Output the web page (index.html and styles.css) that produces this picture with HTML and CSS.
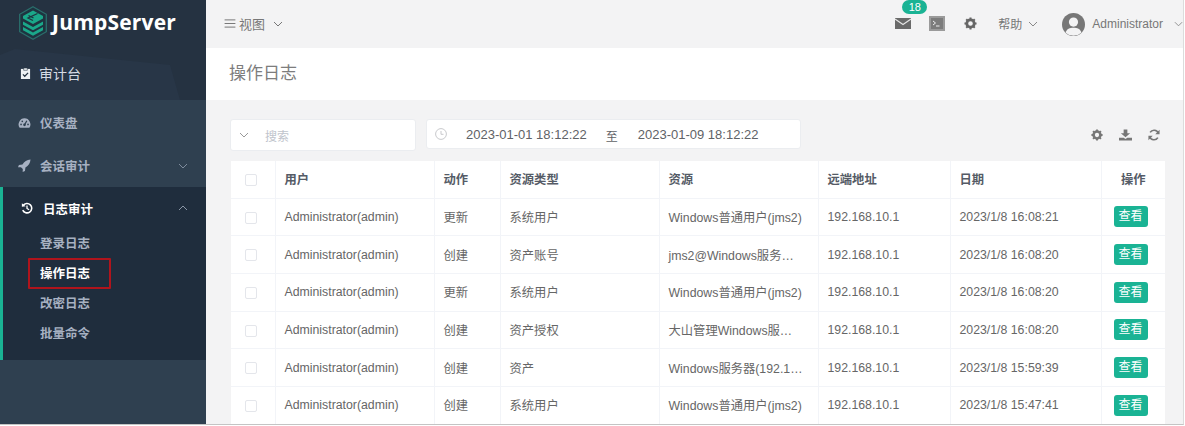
FILE: index.html
```html
<!DOCTYPE html>
<html lang="zh">
<head>
<meta charset="utf-8">
<title>操作日志</title>
<link rel="stylesheet" href="styles.css">
</head>
<body>
<div class="app">
  <aside class="sidebar">
    <div class="side-head">
      <div class="logo">
        <svg class="logo-mark" viewBox="0 0 28 34" width="28" height="34">
          <path d="M14 .8 27.300 8.300v17.400L14 33.200.700 25.700V8.300Z" fill="#1e3440" stroke="#2a6f6c" stroke-width="1.300"/>
          <path d="M14 4.500 24 10v2.500L14 18 4 12.500V10Z" fill="#1aa88a"/>
          <path d="M4 15.500 14 21l10-5.500v3.200L14 24.200 4 18.700Z" fill="#1aa88a"/>
          <path d="M4 21 14 26.500 24 21v3.200L14 29.700 4 24.200Z" fill="#1aa88a"/>
          <path d="M18.500 7.500 9 12l5 2.500M9.500 9.500l5 2.500" fill="none" stroke="#1e3440" stroke-width="1.300"/>
        </svg>
        <span class="logo-text">JumpServer</span>
      </div>
      <div class="console">
        <svg class="console-icon" viewBox="0 0 12 14" width="11" height="13">
          <path d="M1 2h10v11H1Z" fill="#eef1f4"/>
          <path d="M4 1h4v2.500H4Z" fill="#eef1f4" stroke="#253342" stroke-width=".6"/>
          <path d="m3.200 8 2 2 3.600-3.700" fill="none" stroke="#253342" stroke-width="1.400"/>
        </svg>
        <span>审计台</span>
      </div>
    </div>
    <nav class="menu">
      <div class="menu-item">
        <svg class="menu-icon" viewBox="0 0 14 12" width="13" height="12">
          <path d="M7 1a6.500 6.500 0 0 0-5.200 10.200h10.400A6.500 6.500 0 0 0 7 1Z" fill="#a7b1c2"/>
          <path d="M7 8 9.500 3.500" stroke="#2f4050" stroke-width="1.300"/>
          <circle cx="7" cy="8" r="1.400" fill="#2f4050"/>
          <circle cx="3.300" cy="7.500" r=".9" fill="#2f4050"/>
          <circle cx="4.600" cy="4.200" r=".9" fill="#2f4050"/>
          <circle cx="10.800" cy="7.500" r=".9" fill="#2f4050"/>
        </svg>
        <span>仪表盘</span>
      </div>
      <div class="menu-item">
        <svg class="menu-icon" viewBox="0 0 14 14" width="13" height="13">
          <path d="M13.500.5C9.500.8 6.800 2.800 4.800 6L1 6.500 0 9l3.200-.2 2 2L5 14l2.500-1 .5-3.800C11.200 7.200 13.200 4.500 13.500.5Z" fill="#a7b1c2"/>
        </svg>
        <span>会话审计</span>
        <svg class="chev" viewBox="0 0 10 6" width="10" height="6"><path d="m1 1 4 4 4-4" fill="none" stroke="#7f8c9d" stroke-width="1"/></svg>
      </div>
      <div class="group">
        <div class="group-title">
          <svg class="history" viewBox="0 0 14 14" width="12" height="12">
            <path d="M2.500 4A5.500 5.500 0 1 1 2 9.500" fill="none" stroke="#fff" stroke-width="1.800"/>
            <path d="M1 1.500 5.500 5 1 5.500Z" fill="#fff"/>
            <path d="M7 4v3.500l2.500 1.500" fill="none" stroke="#fff" stroke-width="1.500"/>
          </svg>
          <span>日志审计</span>
          <svg class="chev" viewBox="0 0 10 6" width="10" height="6"><path d="m1 5 4-4 4 4" fill="none" stroke="#8a96a6" stroke-width="1"/></svg>
        </div>
        <a class="sub">登录日志</a>
        <a class="sub current">操作日志</a>
        <a class="sub">改密日志</a>
        <a class="sub">批量命令</a>
      </div>
    </nav>
  </aside>

  <main class="main">
    <header class="topbar">
      <div class="view-menu">
        <svg viewBox="0 0 12 10" width="12" height="9"><path d="M0 1h12M0 5h12M0 9h12" stroke="#777" stroke-width="1.100"/></svg>
        <span>视图</span>
        <svg class="gap-chev" viewBox="0 0 10 6" width="10" height="6"><path d="m1 1 4 4 4-4" fill="none" stroke="#777" stroke-width="1"/></svg>
      </div>
      <div class="top-right">
        <div class="mail">
          <span class="badge">18</span>
          <svg viewBox="0 0 16 11" width="16" height="11"><path d="M0 0h16v11H0Z" fill="#6a6a6a"/><path d="m0 1 8 5.500L16 1" fill="none" stroke="#e6e6e6" stroke-width="1.100"/></svg>
        </div>
        <svg class="term" viewBox="0 0 16 15" width="16" height="15">
          <path d="M0 0h16v15H0Z" fill="#9a9a9a"/><path d="M2 2h12v11H2Z" fill="#7c7c7c"/>
          <path d="m4 5 2.500 2L4 9M7 10h3.500" fill="none" stroke="#eee" stroke-width="1"/>
        </svg>
        <svg class="gear" viewBox="0 0 14 14" width="13" height="13">
          <circle cx="7" cy="7" r="4" fill="none" stroke="#666" stroke-width="3"/>
          <path d="M7 .5v2.500M7 11v2.500M.5 7H3M11 7h2.500M2.400 2.400l1.800 1.800M9.800 9.800l1.800 1.800M11.600 2.400 9.800 4.200M4.200 9.800l-1.800 1.800" stroke="#666" stroke-width="2.200"/>
        </svg>
        <div class="help">
          <span>帮助</span>
          <svg viewBox="0 0 10 6" width="10" height="6"><path d="m1 1 4 4 4-4" fill="none" stroke="#888" stroke-width="1"/></svg>
        </div>
        <div class="user">
          <svg class="avatar" viewBox="0 0 24 24" width="23" height="23">
            <circle cx="12" cy="12" r="12" fill="#777"/>
            <circle cx="12" cy="9.500" r="4.800" fill="#f3f3f4"/>
            <path d="M3.800 20.500C5 16.500 8 15.500 12 15.500s7 1 8.200 5A12 12 0 0 1 3.800 20.500Z" fill="#f3f3f4"/>
          </svg>
          <span>Administrator</span>
          <svg class="user-chev" viewBox="0 0 10 6" width="9" height="6"><path d="m1 1 4 4 4-4" fill="none" stroke="#888" stroke-width="1"/></svg>
        </div>
      </div>
    </header>
    <div class="page-head">操作日志</div>
    <section class="content">
      <div class="toolbar">
        <div class="search">
          <svg viewBox="0 0 10 6" width="10" height="6"><path d="m1 1 4 4 4-4" fill="none" stroke="#999" stroke-width="1"/></svg>
          <span>搜索</span>
        </div>
        <div class="range">
          <svg viewBox="0 0 12 12" width="12" height="12"><circle cx="6" cy="6" r="5.400" fill="none" stroke="#c8c9cc" stroke-width="1"/><path d="M6 3v3.300h2.500" fill="none" stroke="#c8c9cc" stroke-width="1"/></svg>
          <span class="date first">2023-01-01 18:12:22</span>
          <span class="to">至</span>
          <span class="date">2023-01-09 18:12:22</span>
        </div>
        <div class="actions">
          <svg viewBox="0 0 14 14" width="12" height="12">
            <circle cx="7" cy="7" r="4" fill="none" stroke="#777" stroke-width="3"/>
            <path d="M7 .5v2.500M7 11v2.500M.5 7H3M11 7h2.500M2.400 2.400l1.800 1.800M9.800 9.800l1.800 1.800M11.600 2.400 9.800 4.200M4.200 9.800l-1.800 1.800" stroke="#777" stroke-width="2.200"/>
          </svg>
          <svg viewBox="0 0 14 12" width="13" height="12">
            <path d="M5 0h4v4h3L7 8.500 2 4h3Z" fill="#777"/><path d="M0 9h5l2 1.300L9 9h5v3H0Z" fill="#777"/>
          </svg>
          <svg viewBox="0 0 14 14" width="12" height="12">
            <path d="M12 5A5.300 5.300 0 0 0 2.500 4M2 9a5.300 5.300 0 0 0 9.500 1" fill="none" stroke="#777" stroke-width="1.900"/>
            <path d="M13.500 1v5h-5ZM.5 13V8h5Z" fill="#777"/>
          </svg>
        </div>
      </div>
      <table class="log">
        <colgroup>
          <col class="c-check"><col class="c-user"><col class="c-act"><col class="c-type"><col class="c-res"><col class="c-ip"><col class="c-date"><col class="c-op">
        </colgroup>
        <thead>
          <tr><th><i class="box"></i></th><th>用户</th><th>动作</th><th>资源类型</th><th>资源</th><th>远端地址</th><th>日期</th><th class="center">操作</th></tr>
        </thead>
        <tbody>
          <tr><td><i class="box"></i></td><td>Administrator(admin)</td><td>更新</td><td>系统用户</td><td>Windows普通用户(jms2)</td><td>192.168.10.1</td><td>2023/1/8 16:08:21</td><td class="op"><a class="view">查看</a></td></tr>
          <tr><td><i class="box"></i></td><td>Administrator(admin)</td><td>创建</td><td>资产账号</td><td>jms2@Windows服务…</td><td>192.168.10.1</td><td>2023/1/8 16:08:20</td><td class="op"><a class="view">查看</a></td></tr>
          <tr><td><i class="box"></i></td><td>Administrator(admin)</td><td>更新</td><td>系统用户</td><td>Windows普通用户(jms2)</td><td>192.168.10.1</td><td>2023/1/8 16:08:20</td><td class="op"><a class="view">查看</a></td></tr>
          <tr><td><i class="box"></i></td><td>Administrator(admin)</td><td>创建</td><td>资产授权</td><td>大山管理Windows服…</td><td>192.168.10.1</td><td>2023/1/8 16:08:20</td><td class="op"><a class="view">查看</a></td></tr>
          <tr><td><i class="box"></i></td><td>Administrator(admin)</td><td>创建</td><td>资产</td><td>Windows服务器(192.1…</td><td>192.168.10.1</td><td>2023/1/8 15:59:39</td><td class="op"><a class="view">查看</a></td></tr>
          <tr><td><i class="box"></i></td><td>Administrator(admin)</td><td>创建</td><td>系统用户</td><td>Windows普通用户(jms2)</td><td>192.168.10.1</td><td>2023/1/8 15:47:41</td><td class="op"><a class="view">查看</a></td></tr>
        </tbody>
      </table>
    </section>
  </main>
</div>
</body>
</html>
```
FILE: styles.css
```css
*, *::before, *::after { box-sizing: border-box; }
html, body { margin: 0; height: 100%; overflow: hidden; background: #fff; }
body { font-family: "Liberation Sans", "Noto Sans CJK SC", sans-serif; color: #606266; font-size: 13px; }
svg { display: block; flex: none; }

.app { display: flex; height: 425px; width: 1184px; border-right: 1px solid #dcdcdc; border-bottom: 1px solid #c4c4c4; }

.sidebar { width: 206px; flex: none; background: #2f4050; display: flex; flex-direction: column; }
.side-head { height: 100px; background: #253241; padding: 6px 0 0 19px; position: relative; }
.side-head::before { content: ""; position: absolute; inset: 0; background: #283647; clip-path: polygon(0 55px, 15px 49px, 170px 65px, 180px 100px, 0 100px); }
.logo, .console { position: relative; }
.logo { display: flex; align-items: center; gap: 5px; height: 34px; }
.logo-text { font-family: "Open Sans", sans-serif; font-weight: 700; font-size: 21px; color: #fff; letter-spacing: .2px; position: relative; top: -1px; }
.console { display: flex; align-items: center; gap: 8px; height: 20px; margin-top: 23px; color: #d6dbe4; font-size: 14px; padding-left: 1px; }

.menu { flex: 1; padding-top: 1px; }
.menu-item { height: 43px; display: flex; align-items: center; padding: 0 18px; color: #a7b1c2; font-size: 12.500px; font-weight: 700; }
.menu-item span { margin-left: 9px; flex: 1; }
.group { background: #1f2d3d; border-left: 3px solid #1ab394; height: 173px; }
.group-title { height: 42px; display: flex; align-items: center; padding: 0 18px; color: #fff; font-weight: 700; font-size: 12.500px; }
.group-title span { margin-left: 10px; flex: 1; }
.sub { display: block; height: 30px; line-height: 30px; padding-left: 37px; font-size: 12.500px; font-weight: 700; color: #a7b1c2; position: relative; }
.sub.current { color: #fff; }
.sub.current::after { content: ""; position: absolute; left: 25px; top: -1px; width: 83px; height: 31px; border: 2px solid #b0141c; border-radius: 1px; }

.main { flex: 1; min-width: 0; background: #f3f3f4; display: flex; flex-direction: column; overflow: hidden; }
.topbar { height: 48px; flex: none; display: flex; align-items: center; justify-content: space-between; padding: 0 0 1px 18px; color: #777; font-size: 12px; }
.view-menu { display: flex; align-items: center; gap: 3px; font-size: 13px; }
.gap-chev { margin-left: 5px; }
.top-right { display: flex; align-items: center; }
.mail { position: relative; margin-right: 18px; }
.badge { position: absolute; left: 7px; top: -18px; width: 25px; height: 14px; border-radius: 7px; background: #1ab394; color: #fff; font-size: 11px; line-height: 14px; text-align: center; }
.term { margin-right: 19px; }
.gear { margin-right: 21px; }
.help { display: flex; align-items: center; gap: 6px; margin-right: 24px; }
.user { display: flex; align-items: center; gap: 7px; }
.avatar { margin-top: 1px; }
.user-chev { margin-left: 4px; }
.page-head { height: 52px; flex: none; background: #fff; padding: 16px 0 0 23px; font-size: 17px; color: #7d7d7d; line-height: 20px; }

.content { flex: 1; padding: 19px 18px 0 24px; overflow: hidden; }
.toolbar { display: flex; align-items: flex-start; height: 42px; }
.search { width: 186px; height: 32px; background: #fff; border: 1px solid #ebedf0; border-radius: 3px; display: flex; align-items: center; padding-left: 8px; gap: 16px; color: #c0c4cc; font-size: 12px; }
.range { margin-left: 10px; width: 375px; height: 30px; background: #fff; border: 1px solid #ebedf0; border-radius: 3px; display: flex; align-items: center; padding-left: 8px; color: #606266; font-size: 13px; }
.date.first { margin-left: 19px; }
.to { margin: 2px 20px 0 19px; font-size: 12px; }
.actions { margin-left: auto; margin-right: 5px; display: flex; align-items: center; gap: 16px; height: 32px; }

.log { width: 934px; margin-left: 1px; border-collapse: collapse; table-layout: fixed; background: #fff; font-size: 12.300px; color: #666; }
.c-check { width: 44px; } .c-user { width: 159px; } .c-act { width: 66px; } .c-type { width: 159px; }
.c-res { width: 159px; } .c-ip { width: 132px; } .c-date { width: 151px; } .c-op { width: 64px; }
.log th, .log td { border: 1px solid #f2f4f8; padding: 0 9px; text-align: left; white-space: nowrap; overflow: hidden; }
.log tr > :first-child { border-left: 0; text-align: center; padding: 0 3px 0 0; }
.log tr > :last-child { border-right: 0; }
.log thead tr { height: 37px; }
.log thead th { border-top: 0; font-weight: 700; color: #555b66; }
.log tbody tr { height: 37.700px; }
.log .center { text-align: center; padding: 0; }
.log .op { padding: 0 0 0 12px; }
.box { display: inline-block; width: 12px; height: 12px; border: 1px solid #e4e6eb; border-radius: 2px; background: #fff; vertical-align: middle; }
.view { display: inline-block; width: 34px; height: 21px; line-height: 21px; background: #1ab394; border-radius: 3px; color: #fff; font-size: 12px; text-align: center; vertical-align: middle; }
```
